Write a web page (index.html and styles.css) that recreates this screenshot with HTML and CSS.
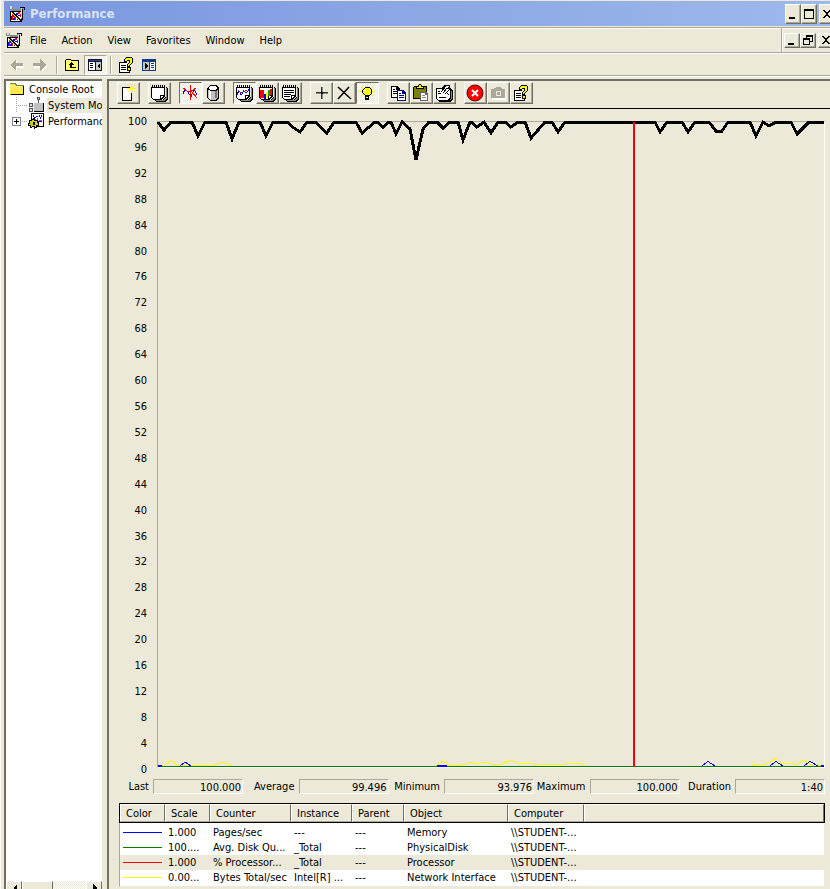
FILE: index.html
```
<!DOCTYPE html>
<html lang="en">
<head>
<meta charset="utf-8">
<title>Performance</title>
<link rel="stylesheet" href="styles.css">
</head>
<body>
<svg class="defs" aria-hidden="true">
  <symbol id="perf" viewBox="0 0 16 16">
    <path fill="#000" d="M1 5h12v11H1z"/><path fill="#fff" d="M2 6h10v9H2z"/>
    <path fill="#00f" d="M2 10h1v4H2zM4 8h1v3H4zM7 7h2v2H7zM9 9h2v1H9zM4 12h2v2H4zM8 13h2v1H8z"/>
    <path fill="#f00" d="M3 8h1v6H3zM5 10h2v2H5zM6 12h1v2H6zM9 6h2v2H9zM11 8h1v3h-1z"/>
    <path fill="#000" d="M2 5h2v1h1v1h1v1h1v1h1v1h1v1h1v1h1v1h1v2h-1v-1h-1v-1H9v-1H8v-1H7v-1H6v-1H5V9H4V8H3V7H2z"/>
    <path fill="#ff0" d="M2 6h1v1h1v1h1v1h1v1h1v1h1v1h1v1h1v1h1v1h-1v-1H9v-1H8v-1H7v-1H6v-1H5V9H4V8H3V7H2z"/>
    <path fill="#888" d="M0 1h4v3H0zM4 3h8v2H4zM11 1h3v2h-1v10h-1V3h-1z"/><path fill="#ddd" d="M1 0h2v3H1zM12 2h1v10h-1z"/>
    <path fill="#000" d="M13 3h1v11h-1zM11 1h5v1h-5zM15 2h1v2h-1z"/>
  </symbol>
  <symbol id="pad" viewBox="0 0 18 18">
    <path fill="#000" d="M4 16l2 2h9l3-3V5l-2-2v9l-4 4z"/><path fill="#888" d="M5 16h8l3-3V4h1v10l-3 3H6z"/>
    <path fill="#000" d="M1 3h14v9l-4 4H3l-2-2z"/><path fill="#fff" d="M2 4h12v7h-4v4H3l-1-1z"/><path fill="#fff" d="M11 12h2l-2 2z"/>
    <path stroke="#000" stroke-width="3" stroke-dasharray="1 1" d="M2 2.500h13"/>
  </symbol>
  <symbol id="helpdoc" viewBox="0 0 16 16">
    <path fill="#000" d="M1 5h8v2h3v9H1z"/><path fill="#fff" d="M2 6h7v2h2v7H2z"/>
    <path stroke="#000" d="M3 8.500h5M3 10.500h5M3 12.500h5"/>
    <path fill="#000" d="M7 1h1V0h6v1h1v5h-1v1h-1v1h-1v2H9V7h1V6h1V4H9v1H6V2h1z"/>
    <path fill="#ff0" d="M7 2h1V1h6v5h-1v1h-1v1h-1v1h-1V7h1V6h1V3H9v1H7z"/>
    <path fill="#000" d="M9 10h4v4H9z"/><path fill="#ff0" d="M10 11h2v2h-2z"/>
  </symbol>
  <symbol id="folder" viewBox="0 0 16 14">
    <path fill="#808040" d="M1 1h6l1 2h7v10H1z"/><path fill="#ffe94d" d="M1 2h5l1 2h7v8H1z"/><path stroke="#fff799" d="M1 4.500h12"/>
    <path fill="#000" d="M2 13h13V4h-1v8H2z"/>
  </symbol>
  <symbol id="arrow" viewBox="0 0 14 12"><path fill="#fff" d="M1 7l6-6v4h7v4H7v4z"/><path fill="#aca899" d="M0 6l6-6v4h7v3H6v5z"/></symbol>
  <symbol id="min" viewBox="0 0 12 12"><path fill="#000" d="M2 9h6v2H2z"/></symbol>
  <symbol id="close" viewBox="0 0 12 12"><path fill="#000" d="M2 2h2v1h1v1h2V3h1V2h2v1H9v1H8v1H7v2h1v1h1v1h1v1H8V9H7V8H5v1H4v1H2V9h1V8h1V7h1V5H4V4H3V3H2z"/></symbol>
</svg>

<div class="window">
  <header class="title">
    <svg class="i16"><use href="#perf"/></svg>
    <h1>Performance</h1>
    <div class="controls">
      <button aria-label="Minimize"><svg class="i12"><use href="#min"/></svg></button>
      <button aria-label="Maximize"><svg class="i12" viewBox="0 0 12 12"><path fill="#000" d="M1 1h10v10H1zM2 3v7h8V3z" fill-rule="evenodd"/></svg></button>
      <button class="shut" aria-label="Close"><svg class="i12"><use href="#close"/></svg></button>
    </div>
  </header>

  <nav class="menu">
    <svg class="i16"><use href="#perf"/></svg>
    <button>File</button><button>Action</button><button>View</button><button>Favorites</button><button>Window</button><button>Help</button>
    <div class="controls child">
      <button aria-label="Minimize child window"><svg class="i12"><use href="#min"/></svg></button>
      <button aria-label="Restore child window"><svg class="i12" viewBox="0 0 12 12"><path fill="#000" fill-rule="evenodd" d="M4 1h7v7H8V7h2V3H5v1H4zM1 4h7v7H1zM2 6v4h5V6z"/></svg></button>
      <button class="shut" aria-label="Close child window"><svg class="i12"><use href="#close"/></svg></button>
    </div>
  </nav>

  <div class="console-bar">
    <button aria-label="Back" disabled><svg class="arrow"><use href="#arrow"/></svg></button>
    <button aria-label="Forward" disabled><svg class="arrow" viewBox="0 0 14 12"><path fill="#fff" d="M14 7L8 1v4H1v4h7v4z"/><path fill="#aca899" d="M13 6L7 0v4H0v3h7v5z"/></svg></button>
    <span class="rule"></span>
    <button aria-label="Up one level"><svg class="i16" viewBox="0 0 16 14"><path fill="#000" d="M1 2l1-1h4l1 1h8v11H1z"/><path fill="#ff6" d="M2 2h4l1 1h7v9H2z"/><path fill="#000" d="M4 7l3-3 3 3H8v2h4v1H6V7z"/></svg></button>
    <button class="pressed" aria-label="Show or hide console tree"><svg class="i16" viewBox="0 0 16 14"><path fill="#113" d="M1 1h14v12H1z"/><path fill="#22449c" d="M2 2h12v1H2z"/><path fill="#fff" d="M2 4h6v8H2z"/><path fill="#c8c8c8" d="M9 4h5v8H9z"/><path stroke="#000" d="M3 5.500h3M3 7.500h3M3 9.500h3"/><path fill="#000" d="M13 5v6l-3-3z"/></svg></button>
    <span class="rule"></span>
    <button aria-label="Help"><svg class="i16"><use href="#helpdoc"/></svg></button>
    <button aria-label="Show action pane"><svg class="i16" viewBox="0 0 16 14"><path fill="#113a80" d="M1 1h14v12H1z"/><path fill="#fff" d="M9 4h5v8H9z"/><path fill="#c8c8c8" d="M2 4h6v8H2z"/><path stroke="#113a80" d="M10 5.500h3M10 7.500h3M10 9.500h3"/><path fill="#000" d="M4 5v6l3-3z"/></svg></button>
  </div>

  <main class="body">
    <aside class="tree">
      <ul>
        <li><svg class="i16" viewBox="0 0 16 14"><use href="#folder"/></svg><span>Console Root</span></li>
        <li class="leaf selected"><svg class="i16" viewBox="0 0 16 16"><path fill="#808080" d="M6 6h10v9H6z"/><path fill="#c0c0c0" d="M6 6h9v8H6z"/><path fill="#000" d="M6 14h10v1H6zM15 6h1v9h-1z"/><path fill="#555" d="M10 2h1v4h-1zM9 0h3v3H9zM1 6h4v4H1zM1 11h4v4H1z"/><path fill="#ddd" d="M10 1h1v1h-1zM2 7h2v2H2zM2 12h2v2H2z"/></svg><span>System Monitor</span></li>
        <li class="leaf last"><button class="plus" aria-label="Expand"><svg viewBox="0 0 7 7"><path fill="#000" d="M1 3h2V1h1v2h2v1H4v2H3V4H1z"/></svg></button><svg class="i16" viewBox="0 0 16 16"><path fill="#000" d="M3 0h13v14H3z"/><path fill="#fff" d="M4 1h11v12H4z"/><path fill="#00f" d="M5 2h1v2H5zM6 4h2v1H6zM8 3h2v1H8zM11 2h1v2h-1zM12 4h1v2h-1zM13 2h1v2h-1zM10 8h4v1h-4z"/><path fill="#f33" d="M6 6h2v1H6zM9 5h1v2H9zM11 7h3v1h-3z"/><path fill="#000" d="M1 7h2V6h2V5h2v2h3v2h1v4H9v2H7v1H6v-2H4v1H2v-2H0v-3h1z"/><path fill="#cc2" d="M2 8h2V7h2v1h3v2h1v2H8v2H7v-1H4v1H3v-2H1v-1h1z"/><path fill="#000" d="M5 9h2v3H5z"/></svg><span>Performance Logs</span></li>
      </ul>
      <div class="scroll"><span class="sb"><svg viewBox="0 0 14 14"><path fill="#000" d="M5 6l4-4v8z"/></svg></span><span class="sb thumb"></span><span class="track"></span><span class="sb"><svg viewBox="0 0 14 14"><path fill="#000" d="M9 6L5 2v8z"/></svg></span></div>
    </aside>

    <section class="monitor">
      <div class="tools">
        <div><button aria-label="New counter set"><svg viewBox="0 0 18 18"><path fill="#000" d="M3 3h10v14H3z"/><path fill="#fff" d="M4 4h8v12H4z"/><path fill="#ff0" d="M12 0h1v3h1V2h1V1h1v1h-1v1h-1v1h3v1h-3v1h1v1h1v1h-1V7h-1V6h-1v3h-1V6h-1v1h-1v1H9V7h1V6h1V5H8V4h3V3h-1V2H9V1h1v1h1v1h1z"/><path fill="#ff0" d="M11 3h3v3h-3z"/></svg></button></div>
        <div><button aria-label="Clear display"><svg><use href="#pad"/></svg></button></div>
        <div>
          <button class="pressed" aria-label="View current activity"><svg viewBox="0 0 18 18"><path fill="none" stroke="#00f" d="M2 10l2-5 3 3 3 5 3-8 3 6"/><path fill="none" stroke="#f00" d="M2 4l4 3 3 1 6-4M10 7l6 7"/><path fill="#f00" d="M9 1h1v15H9z"/></svg></button>
          <button aria-label="View log data"><svg viewBox="0 0 18 18"><path fill="#000" d="M6 1h6l3 3v10l-3 3H6l-3-3V4z"/><path fill="#c0c0c0" d="M4 6l3 1h4l3-1v8l-3 2H7l-3-2z"/><path fill="#fff" d="M7 2h4l3 2-3 2H7L4 4zM5 7h2v8H5z"/><path fill="#777" d="M11 7h2v7h-2z"/></svg></button>
        </div>
        <div>
          <button class="pressed" aria-label="View graph"><svg viewBox="0 0 18 18"><use href="#pad"/><path fill="#f00" d="M3 6h1v1H3zM4 7h1v1H4zM5 8h2v1H5zM9 7h1v1H9zM10 6h2v1h-2z"/><path fill="#00f" d="M2 8h1v3H2zM3 7h1v2H3zM5 9h1v2H5zM6 10h1v1H6zM7 8h1v2H7zM8 6h1v2H8zM10 8h2v1h-2zM12 7h1v1h-1zM13 5h1v2h-1z"/></svg></button>
          <button aria-label="View histogram"><svg viewBox="0 0 18 18"><use href="#pad"/><path fill="#f00" d="M2 6h4v8H2z"/><path fill="#00f" d="M6 10h2v5H6z"/><path fill="#ff0" d="M8 8h2v6H8z"/><path fill="#0a0" d="M10 6h2v6h-2z"/><path fill="#f00" d="M12 5h2v6h-2z"/></svg></button>
          <button aria-label="View report"><svg viewBox="0 0 18 18"><use href="#pad"/><path stroke="#000" d="M3 6.500h10M3 8.500h10M3 10.500h7M3 12.500h6"/></svg></button>
        </div>
        <div>
          <button aria-label="Add"><svg viewBox="0 0 18 18"><path fill="#333" d="M9 3h1v12H9zM4 8h12v1H4z"/><path fill="#888" d="M10 3h1v12h-1zM4 9h12v1H4z"/><path fill="#000" d="M9 8h2v2H9z"/></svg></button>
          <button aria-label="Delete"><svg class="smooth" viewBox="0 0 18 18"><path fill="none" stroke="#000" stroke-width="1.500" d="M3 3l13 12M14 3L3 15"/></svg></button>
          <button class="pressed" aria-label="Highlight"><svg viewBox="0 0 18 18"><path stroke="#ff0" d="M3 3l12 9M15 3L3 12M9 0v3M1 7h16"/><path fill="#000" d="M7 3h4l3 3v3l-3 3v4H7v-4L4 9V6z"/><path fill="#ff0" d="M7 4h4l2 2v3l-2 2H7L5 9V6z"/><path fill="#fff" d="M6 6h2v1H6zM8 13h2v1H8z"/></svg></button>
        </div>
        <div>
          <button aria-label="Copy properties"><svg viewBox="0 0 18 18"><path fill="#000" d="M2 2h6l3 3v9H2z"/><path fill="#fff" d="M3 3h4v3h3v7H3z"/><path stroke="#000" d="M4 5.500h2M4 7.500h4M4 9.500h4"/><path fill="#008" d="M8 6h6l3 3v8H8z"/><path fill="#fff" d="M9 7h4v3h3v6H9z"/><path stroke="#008" d="M10 9.500h2M10 11.500h5M10 13.500h5"/></svg></button>
          <button aria-label="Paste counter list"><svg viewBox="0 0 18 18"><path fill="#000" d="M2 2h12l1 1v12H1V3z"/><path fill="#808000" d="M2 3h12v11H2z"/><path fill="#000" d="M4 2h2l1-2h2l1 2h2v3H4z"/><path fill="#ff0" d="M5 3h6v1H5zM7 1h2v2H7z"/><path fill="#666" d="M8 8h6l2 2v7H8z"/><path fill="#fff" d="M9 9h4v2h2v5H9z"/><path stroke="#888" d="M10 11.500h3M10 13.500h4"/></svg></button>
          <button aria-label="Properties"><svg viewBox="0 0 18 18"><path fill="#000" d="M1 4h5l4-3h5v3l3 2v9l-3 3H4l-3-3z"/><path fill="#888" d="M14 16h1l2-2V7h-1v7z"/><path fill="#fff" d="M2 5h13v8l-3 3H3l-1-1zM9 3l2-1h3l-3 5z"/><path fill="none" stroke="#000" d="M6 8l5-6M8 9l4-5M10 10l5-5M3 7.500h2M3 9.500h3M4 13.500h7M12 9l2 2"/></svg></button>
        </div>
        <div>
          <button aria-label="Freeze display"><svg class="smooth" viewBox="0 0 18 18"><circle cx="9" cy="9" r="8" fill="#f00" stroke="#600"/><path stroke="#fff" stroke-width="2" d="M6 6l6 6M12 6l-6 6"/></svg></button>
          <button aria-label="Update data" disabled><svg viewBox="0 0 18 18"><path fill="#fff" d="M3 6h4V4h6v2h4v10H3z"/><path fill="#aca899" d="M2 5h3V4h2V3h5v1h1v1h3v9H2z"/><path fill="none" stroke="#ece9d8" d="M7 7h4v4H7z"/></svg></button>
          <button aria-label="Monitor help"><svg class="i16"><use href="#helpdoc"/></svg></button>
        </div>
      </div>

      <div class="graph">
        <ol class="scale"><li>100</li><li>96</li><li>92</li><li>88</li><li>84</li><li>80</li><li>76</li><li>72</li><li>68</li><li>64</li><li>60</li><li>56</li><li>52</li><li>48</li><li>44</li><li>40</li><li>36</li><li>32</li><li>28</li><li>24</li><li>20</li><li>16</li><li>12</li><li>8</li><li>4</li><li>0</li></ol>
        <div class="plot">
          <svg viewBox="158 122 666 645" preserveAspectRatio="none" role="img" aria-label="Counter history">
            <path stroke="#ff0" d="M158 766H162L166 764 171 760 177 765 210 766 217 764 222 762 228 764 232 766H436L440 763 443 761 449 765 462 765 470 762 476 764 484 762 492 764 502 764 511 760 520 764 530 763 537 765 550 764 558 765 566 764 574 763 582 764 586 766H622M678 766H684M752 766L757 764 764 765 770 762 776 758 782 764 790 763 797 765 803 760 810 764 824 766"/>
            <path stroke="#00f" d="M180 766L185 762 191 766M702 766L708 761.500 715 766M770 766L776 761.500 783 766M804 766L810 761.500 818 766"/>
            <path stroke="green" d="M158 766.500H824"/>
            <path stroke="#00f" stroke-width="2" d="M158 766H162M437 766H447M821 766H824"/>
            <path stroke="#000" stroke-width="3" d="M158 122L164 130 171 122H192L198 136 205 122H226L232 139 239 122H260L266 136 273 122H288L291 126 300 132 307 122H315L327 133 334 122H356L362 133 375 122H377L383 127 389 122H391L396 134 402 122 410 129 416 160 423 129 429 122H437L443 128 450 122H458L463 140 470 122H471L477 127 484 122 491 133 498 122H505L511 127 518 122H525L531 138 538 130 545 122H552L558 132 565 122H655L660 132 667 122H682L688 132 695 122H709L716 131H722L728 122H750L756 136 763 122 769 126 776 122H791L797 134 809 122H824"/>
            <path stroke="red" stroke-width="2" d="M634 122V767"/>
          </svg>
        </div>
      </div>

      <div class="stats">
        <div><label for="last">Last</label><output id="last">100.000</output></div>
        <div><label for="avg">Average</label><output id="avg">99.496</output></div>
        <div><label for="low">Minimum</label><output id="low">93.976</output></div>
        <div><label for="high">Maximum</label><output id="high">100.000</output></div>
        <div><label for="dur">Duration</label><output id="dur">1:40</output></div>
      </div>

      <div class="legend">
        <table>
          <colgroup><col class="c45"><col class="c45"><col class="c81"><col class="c61"><col class="c52"><col class="c104"><col class="c76"><col></colgroup>
          <thead><tr><th>Color</th><th>Scale</th><th>Counter</th><th>Instance</th><th>Parent</th><th>Object</th><th>Computer</th><th></th></tr></thead>
          <tbody>
            <tr><td><i class="key blue"></i></td><td>1.000</td><td>Pages/sec</td><td>---</td><td>---</td><td>Memory</td><td>\\STUDENT-...</td><td></td></tr>
            <tr><td><i class="key green"></i></td><td>100....</td><td>Avg. Disk Qu...</td><td>_Total</td><td>---</td><td>PhysicalDisk</td><td>\\STUDENT-...</td><td></td></tr>
            <tr class="selected"><td><i class="key red"></i></td><td>1.000</td><td>% Processor...</td><td>_Total</td><td>---</td><td>Processor</td><td>\\STUDENT-...</td><td></td></tr>
            <tr><td><i class="key yellow"></i></td><td>0.00...</td><td>Bytes Total/sec</td><td>Intel[R] ...</td><td>---</td><td>Network Interface</td><td>\\STUDENT-...</td><td></td></tr>
          </tbody>
        </table>
      </div>
    </section>
  </main>
</div>
</body>
</html>
```
FILE: styles.css
```
:root {
  --face: #ece9d8;
  --shadow: #aca899;
  --dark: #716f64;
}

* { box-sizing: border-box; }

body {
  margin: 0;
  background: var(--face);
  color: #000;
  font: 11px/15px "DejaVu Sans Condensed", "DejaVu Sans", Tahoma, sans-serif;
  overflow: hidden;
}

button {
  margin: 0;
  padding: 0;
  border: 0;
  background: none;
  color: inherit;
  font: inherit;
}

svg { display: block; flex: none; shape-rendering: crispEdges; }
.defs { position: absolute; width: 0; height: 0; }
.smooth { shape-rendering: auto; }
.i16 { width: 16px; height: 16px; }
.i12 { width: 12px; height: 12px; }

.window {
  display: flex;
  flex-direction: column;
  height: 100vh;
  padding: 1px 0 0 4px;
  box-shadow: inset 1px 0 #fff, inset 2px 0 var(--face);
}

/* Title bar */
.title {
  display: flex;
  align-items: center;
  height: 25px;
  padding-left: 5px;
  gap: 5px;
  background: linear-gradient(90deg, #7a96df, #9db9eb);
}

.title h1 {
  margin: 0;
  color: #d8e4f8;
  font-size: 13px;
  font-weight: bold;
}

.controls {
  display: flex;
  height: 20px;
  margin-left: auto;
  margin-right: -5px;
}

.controls button {
  display: grid;
  place-items: center;
  width: 16px;
  background: var(--face);
  border: 1px solid;
  border-color: #fff var(--dark) var(--dark) #fff;
  box-shadow: inset -1px -1px var(--shadow);
}

.controls .shut { margin-left: 2px; }

/* Menu bar */
.menu {
  display: flex;
  align-items: center;
  gap: 1px;
  height: 26px;
  margin-top: 1px;
  padding-left: 2px;
  border-top: 1px solid var(--shadow);
  border-bottom: 1px solid var(--shadow);
  box-shadow: inset 0 1px #fff, 0 1px #fff;
}

.menu > button { padding: 0 7px; }

.menu .child {
  align-items: center;
  align-self: stretch;
  height: auto;
  margin-right: -4px;
  padding-left: 2px;
  border-left: 1px solid var(--shadow);
  box-shadow: inset 1px 0 #fff;
}

.child button { place-items: start center; height: 15px; }

/* Console toolbar */
.console-bar {
  display: flex;
  align-items: center;
  height: 22px;
  margin-top: 1px;
  padding-left: 3px;
  border-bottom: 1px solid var(--shadow);
  box-shadow: 0 1px #fff;
}

.console-bar button {
  display: grid;
  place-items: center start;
  width: 23px;
  height: 20px;
  padding-left: 3px;
}

.console-bar .pressed { padding-left: 2px; }

.arrow { width: 14px; height: 12px; }

.rule {
  width: 2px;
  height: 18px;
  margin: 0 3px;
  border-left: 1px solid var(--shadow);
  border-right: 1px solid #fff;
}

.pressed {
  background: repeating-conic-gradient(#fff 0 25%, var(--face) 0 50%) 0 0 / 2px 2px;
  border: 1px solid;
  border-color: var(--shadow) #fff #fff var(--shadow);
}

/* Panes */
.body {
  display: grid;
  grid-template-columns: 98px 1fr;
  gap: 5px;
  flex: 1;
  min-height: 0;
  padding-top: 3px;
}

.tree {
  display: flex;
  flex-direction: column;
  justify-content: space-between;
  min-width: 0;
  overflow: hidden;
  background: #fff;
  border: solid var(--dark);
  border-width: 2px 0 0 2px;
}

.tree ul { margin: 0; padding: 0; list-style: none; }

.tree li {
  display: flex;
  align-items: center;
  height: 16px;
  padding-left: 3px;
  gap: 3px;
  white-space: nowrap;
}

.tree span { min-width: 0; padding-left: 1px; overflow: hidden; }

.tree .leaf {
  padding-left: 22px;
  background: repeating-linear-gradient(var(--shadow) 0 1px, #fff 1px 2px) 10px 0 / 1px 16px no-repeat,
    repeating-linear-gradient(90deg, var(--shadow) 0 1px, #fff 1px 2px) 10px 8px / 12px 1px no-repeat;
}

.tree .leaf.last {
  padding-left: 6px;
  background: repeating-linear-gradient(90deg, var(--shadow) 0 1px, #fff 1px 2px) 10px 8px / 12px 1px no-repeat;
}

.selected span { background: var(--face); }

.plus {
  flex: none;
  width: 9px;
  height: 9px;
  margin-right: 4px;
  background: #fff;
  border: 1px solid #808080;
}

.plus svg { width: 7px; height: 7px; }

.scroll { display: flex; height: 8px; overflow: hidden; }

.sb {
  flex: none;
  width: 16px;
  height: 16px;
  background: var(--face);
  border: 1px solid;
  border-color: #fff var(--dark) var(--dark) #fff;
}

.sb svg { width: 14px; height: 14px; }
.scroll .thumb { width: 31px; }

.track {
  flex: 1;
  background: repeating-conic-gradient(#fff 0 25%, var(--face) 0 50%) 0 0 / 2px 2px;
}

.monitor {
  display: flex;
  flex-direction: column;
  min-width: 0;
  border: solid var(--dark);
  border-width: 2px 0 0 2px;
}

.tools {
  display: flex;
  gap: 8px;
  height: 28px;
  padding: 1px 0 0 8px;
  border-bottom: 1px solid #000;
}

.tools > div { display: flex; }

.tools button {
  display: grid;
  place-items: start;
  width: 23px;
  height: 22px;
  padding: 1px;
  border: 1px solid;
  border-color: #fff var(--dark) var(--dark) #fff;
  box-shadow: inset -1px -1px var(--shadow);
}

.tools .pressed { border-color: var(--dark) #fff #fff var(--dark); box-shadow: none; }
.tools svg { width: 18px; height: 18px; }
.tools .i16 { width: 16px; height: 16px; margin: 1px; }

/* Graph */
.graph {
  display: flex;
  flex: 1;
  gap: 10px;
  min-height: 0;
  padding: 5px 5px 0 10px;
}

.scale {
  display: flex;
  flex-direction: column;
  justify-content: space-between;
  width: 28px;
  margin: 0;
  padding: 0;
  list-style: none;
  text-align: right;
}

.plot {
  flex: 1;
  min-width: 0;
  margin: 7px 0 9px;
  border: 1px solid;
  border-color: var(--shadow) #fff #fff var(--shadow);
}

.plot svg { width: 100%; height: 100%; fill: none; overflow: visible; }

/* Value bar */
.stats {
  display: grid;
  grid-template-columns: 115px repeat(4, 1fr);
  margin: 2px 5px 10px 19px;
}

.stats div { display: flex; align-items: center; justify-content: flex-end; gap: 4px; }

.stats output {
  width: 90px;
  height: 15px;
  padding-right: 1px;
  border: 1px solid;
  border-color: var(--shadow) #fff #fff var(--shadow);
  line-height: 15px;
  text-align: right;
}

/* Legend */
.legend {
  height: 83px;
  margin: 0 6px 2px 10px;
  background: #fff;
  border-left: 1px solid var(--shadow);
  border-bottom: 1px solid var(--face);
}

table {
  width: 100%;
  border-collapse: separate;
  border-spacing: 0;
  table-layout: fixed;
}

.c45 { width: 45px; }
.c81 { width: 81px; }
.c61 { width: 61px; }
.c52 { width: 52px; }
.c104 { width: 104px; }
.c76 { width: 76px; }

thead { outline: 1px solid #000; }

th {
  height: 18px;
  padding: 0 5px;
  background: var(--face);
  border: 1px solid;
  border-color: #fff var(--dark) var(--shadow) #fff;
  font-weight: normal;
  line-height: 15px;
  text-align: left;
}

td {
  height: 15px;
  padding: 0 3px;
  line-height: 15px;
  white-space: nowrap;
}

tbody::before { content: ""; display: block; height: 3px; }
tr.selected { background: var(--face); }

.key { display: block; width: 39px; height: 1px; }
.blue { background: #00f; }
.green { background: green; }
.red { background: #e00; }
.yellow { background: #ff0; }
```
